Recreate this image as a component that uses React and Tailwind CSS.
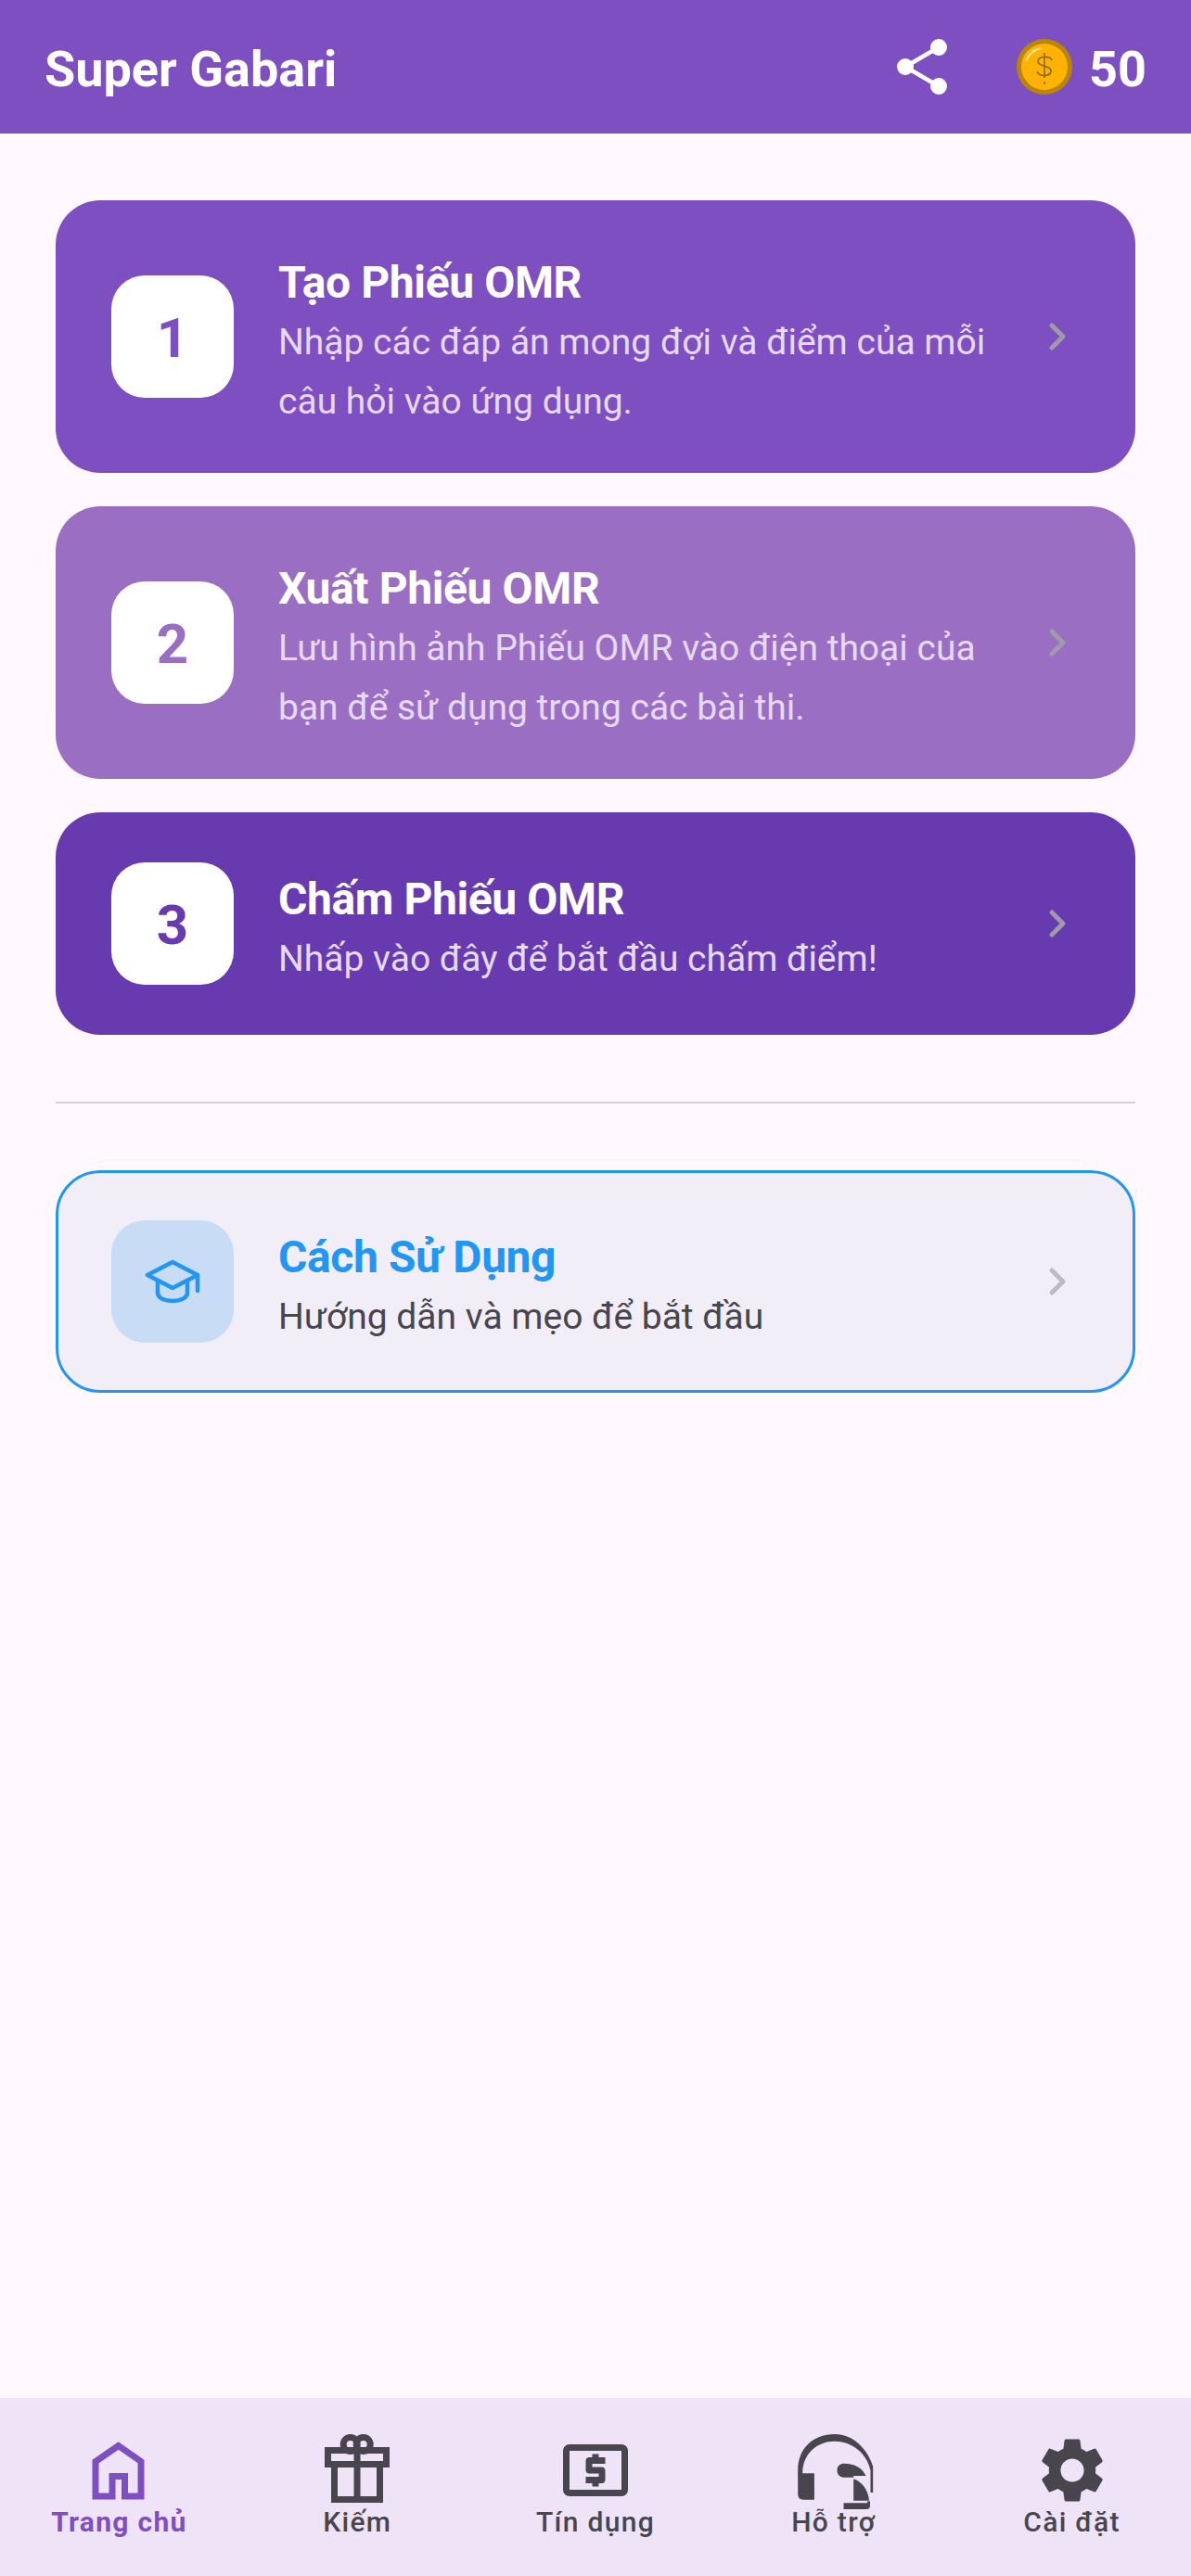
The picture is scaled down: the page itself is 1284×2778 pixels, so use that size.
import React from "react";
import { ChevronRight } from "lucide-react";

const font = { fontFamily: "Roboto, sans-serif" };

const ShareIcon = () => (
  <svg width="54" height="60" viewBox="0 0 54 60" fill="white" stroke="white">
    <circle cx="9" cy="30" r="9" stroke="none" />
    <circle cx="45" cy="9" r="9" stroke="none" />
    <circle cx="45" cy="51" r="9" stroke="none" />
    <path d="M9 30 L45 9 M9 30 L45 51" strokeWidth="4.5" fill="none" />
  </svg>
);

const CoinIcon = () => (
  <svg width="60" height="60" viewBox="0 0 60 60">
    <circle cx="30" cy="30" r="30" fill="#B8860B" />
    <circle cx="30" cy="30" r="25" fill="#FFB300" />
    <path d="M10 24 A21 21 0 0 1 26 10 A26 26 0 0 0 10 24 Z" fill="#FFE9A8" stroke="#FFE9A8" strokeWidth="1.5" />
    <path d="M38 23 C36 18 24 18 23 24 C22 30 38 28 37 35 C36 41 24 41 22 35 M30 15 V42 M30 46 V49" fill="none" stroke="#8A6A0A" strokeWidth="1.6" />
  </svg>
);

const HomeIcon = () => (
  <svg width="84" height="84" viewBox="0 0 84 84" fill="none" stroke="#7E4FC0" strokeWidth="7">
    <path d="M17 70 V32.5 L41.6 15.5 L66 32.5 V70 H48.5 V48.5 H35 V70 Z" />
  </svg>
);

const GiftIcon = () => (
  <svg width="84" height="84" viewBox="0 0 84 84" fill="none" stroke="#49454F" strokeWidth="7">
    <path d="M10.5 20.5 H73.5 V35.5 H10.5 Z M17.5 35.5 V73.5 H66.5 V35.5 M42 20.5 V73.5" />
    <circle cx="34.7" cy="14" r="7.5" />
    <circle cx="48.7" cy="14" r="7.5" />
  </svg>
);

const CreditIcon = () => (
  <svg width="84" height="84" viewBox="0 0 24 24" fill="#49454F">
    <path d="M11 17h2v-1h1c.55 0 1-.45 1-1v-3c0-.55-.45-1-1-1h-3v-1h4V8h-2V7h-2v1h-1c-.55 0-1 .45-1 1v3c0 .55.45 1 1 1h3v1H9v2h2v1zm9-13H4c-1.11 0-1.99.89-1.99 2L2 18c0 1.11.89 2 2 2h16c1.11 0 2-.89 2-2V6c0-1.11-.89-2-2-2zm0 14H4V6h16v12z" />
  </svg>
);

const SupportIcon = () => (
  <svg width="84" height="84" viewBox="0 0 84 84" fill="#49454F" className="overflow-visible">
    <path d="M3.2 47 V42 C3.2 18 20 3 43 3 C62 3 78 18 84.2 38 V66 H81.5 V42 C77 22 60 10.7 43 10.7 C24 10.7 8.2 24 8.2 45.3 V47 Z" />
    <path d="M3.2 45.3 H20.9 V73.7 H9 Q3.2 73.7 3.2 68 Z" />
    <path d="M45.5 42 C45.5 37 49 34.7 53 34.7 C65 34.7 73 40 76.5 48 H63.2 V49.7 H53 C49 49.7 45.5 47 45.5 42 Z" />
    <path d="M63.2 51.3 C72 54 79 63 80 74.7 H63.2 Z" />
    <path d="M52.5 77.3 H78.2 V75.3 H81 V80 Q81 84 77 84 H52.5 Z" />
  </svg>
);

const GearIcon = () => (
  <svg width="84" height="84" viewBox="0 0 24 24" fill="#49454F">
    <path d="M19.14 12.94c.04-.3.06-.61.06-.94 0-.32-.02-.64-.07-.94l2.03-1.58a.49.49 0 0 0 .12-.61l-1.92-3.32a.488.488 0 0 0-.59-.22l-2.39.96c-.5-.38-1.03-.7-1.62-.94l-.36-2.54a.484.484 0 0 0-.48-.41h-3.84c-.24 0-.43.17-.47.41l-.36 2.54c-.59.24-1.13.57-1.62.94l-2.39-.96c-.22-.08-.47 0-.59.22L2.74 8.87c-.12.21-.08.47.12.61l2.03 1.58c-.05.3-.09.63-.09.94s.02.64.07.94l-2.03 1.58a.49.49 0 0 0-.12.61l1.92 3.32c.12.22.37.29.59.22l2.39-.96c.5.38 1.03.7 1.62.94l.36 2.54c.05.24.24.41.48.41h3.84c.24 0 .44-.17.47-.41l.36-2.54c.59-.24 1.13-.56 1.62-.94l2.39.96c.22.08.47 0 .59-.22l1.92-3.32c.12-.22.07-.47-.12-.61l-2.01-1.58zM12 15.6c-1.98 0-3.6-1.62-3.6-3.6s1.62-3.6 3.6-3.6 3.6 1.62 3.6 3.6-1.62 3.6-3.6 3.6z" />
  </svg>
);

const CapIcon = () => (
  <svg width="60" height="48" viewBox="0 0 60 48" fill="none" stroke="#2196F3" strokeWidth="4.5" strokeLinecap="round" strokeLinejoin="round">
    <path d="M3 17 L30 3 L57 17 L30 31 Z" />
    <path d="M14 23 V36 C14 42 22 45 30 45 C38 45 46 42 46 36 V23" />
    <path d="M57 17 V34" />
  </svg>
);

const steps = [
  {
    n: "1",
    title: "Tạo Phiếu OMR",
    desc: ["Nhập các đáp án mong đợi và điểm của mỗi", "câu hỏi vào ứng dụng."],
    bg: "bg-[#7E4FC0]",
    num: "text-[#7E4FC0]",
  },
  {
    n: "2",
    title: "Xuất Phiếu OMR",
    desc: ["Lưu hình ảnh Phiếu OMR vào điện thoại của", "bạn để sử dụng trong các bài thi."],
    bg: "bg-[#9A6FC3]",
    num: "text-[#9A6FC3]",
  },
  {
    n: "3",
    title: "Chấm Phiếu OMR",
    desc: ["Nhấp vào đây để bắt đầu chấm điểm!"],
    bg: "bg-[#673AB0]",
    num: "text-[#673AB0]",
  },
];

const tabs = [
  { label: "Trang chủ", icon: <HomeIcon />, active: true },
  { label: "Kiếm", icon: <GiftIcon /> },
  { label: "Tín dụng", icon: <CreditIcon /> },
  { label: "Hỗ trợ", icon: <SupportIcon /> },
  { label: "Cài đặt", icon: <GearIcon /> },
];

const StepCard = ({ step }) => (
  <div className={`flex min-h-[240px] items-center rounded-[48px] px-[60px] py-[45.5px] ${step.bg}`}>
    <div className={`flex h-[132px] w-[132px] shrink-0 items-center justify-center rounded-[36px] bg-white text-[60px] font-bold ${step.num}`}>
      <span className="mt-[4px]">{step.n}</span>
    </div>
    <div className="ml-[48px] flex-1">
      <div className="pb-[2px] pt-[13px] text-[48px] font-bold leading-[60px] tracking-[-0.4px] text-white">{step.title}</div>
      {step.desc.map((line) => (
        <div key={line} className="text-[39px] leading-[64px] text-[#E6DAF3]">{line}</div>
      ))}
    </div>
    <ChevronRight size={48} strokeWidth={2.5} className="shrink-0 text-[#9E9AA8]" />
  </div>
);

export default function App() {
  return (
    <div className="flex h-[2778px] w-[1284px] flex-col bg-[#FFF8FF]" style={font}>
      <header className="flex h-[144px] items-center bg-[#7E4FC0] pl-[48px] pr-[48px] text-white">
        <div className="mt-[5px] flex-1 text-[54px] font-bold">Super Gabari</div>
        <ShareIcon />
        <div className="ml-[75px]"><CoinIcon /></div>
        <div className="ml-[18px] mt-[5px] text-[54px] font-bold">50</div>
      </header>

      <main className="flex flex-1 flex-col px-[60px] pt-[72px]">
        <div className="flex flex-col gap-[36px]">
          {steps.map((s) => (
            <StepCard key={s.n} step={s} />
          ))}
        </div>

        <div className="mt-[72px] h-[2px] bg-[#D5D0D8]" />

        <div className="mt-[72px] flex min-h-[240px] items-center rounded-[48px] border-[3px] border-[#2196F3] bg-[#F1EEF8] px-[57px]">
          <div className="flex h-[132px] w-[132px] shrink-0 items-center justify-center rounded-[36px] bg-[#C8DCF6]">
            <CapIcon />
          </div>
          <div className="ml-[48px] flex-1">
            <div className="pb-[2px] pt-[13px] text-[48px] font-bold leading-[60px] tracking-[-0.4px] text-[#2196F3]">Cách Sử Dụng</div>
            <div className="text-[39px] leading-[64px] text-[#49454F]">Hướng dẫn và mẹo để bắt đầu</div>
          </div>
          <ChevronRight size={48} strokeWidth={2.5} className="shrink-0 text-[#BDBBC0]" />
        </div>
      </main>

      <nav className="grid h-[192px] grid-cols-5 bg-[#EFE3F7] pt-[36px]">
        {tabs.map((t) => (
          <div key={t.label} className="flex flex-col items-center">
            {t.icon}
            <div className={`-mt-[4px] text-[30px] leading-[36px] tracking-[1.3px] ${t.active ? "font-bold text-[#7E4FC0]" : "font-medium text-[#49454F]"}`}>
              {t.label}
            </div>
          </div>
        ))}
      </nav>
    </div>
  );
}
